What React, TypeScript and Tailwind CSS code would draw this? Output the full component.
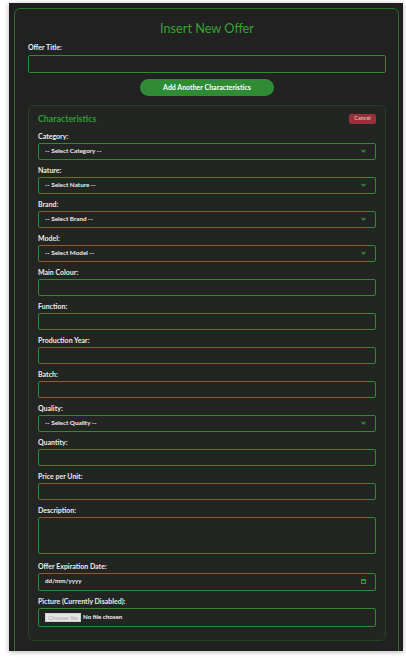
import React from "react";

const font = { fontFamily: "Lato, 'Noto Sans', sans-serif" };

function Label({ children }: { children: React.ReactNode }) {
  return (
    <div className="h-[8px] leading-[8px] text-[7px] font-bold text-[#ececec] mb-[3px] whitespace-nowrap">
      {children}
    </div>
  );
}

function Chevron() {
  return (
    <svg width="5" height="4" viewBox="0 0 5 4" className="mr-[9px]">
      <path d="M0.6 0.8 L2.5 3 L4.4 0.8" fill="none" stroke="#3aa53a" strokeWidth="1.1" />
    </svg>
  );
}

function SelectField({ label, text }: { label: string; text: string }) {
  return (
    <div className="mb-[5.5px]">
      <Label>{label}</Label>
      <div className="h-[17.5px] border border-[#2f8a30] rounded-[2px] bg-[#222522] flex items-center justify-between pl-[6px]">
        <span className="text-[6.3px] font-bold text-[#f0f0f0] leading-none">{text}</span>
        <Chevron />
      </div>
    </div>
  );
}

function TextField({ label }: { label: string }) {
  return (
    <div className="mb-[5.5px]">
      <Label>{label}</Label>
      <div className="h-[17.5px] border border-[#2f8a30] rounded-[2px] bg-[#222522]" />
    </div>
  );
}

export default function App() {
  return (
    <div className="w-[406px] h-[660px] bg-white pt-[3px] pl-[9px]" style={font}>
      <div className="w-[394px] h-[648px] bg-[#1e1e1e] overflow-hidden shadow-[0_1px_5px_rgba(0,0,0,0.3)] pl-[5px] pt-[5px]">
        <div className="w-[385px] h-[700px] border border-[#2c6e2d] rounded-t-[6px] bg-[#212121] pl-[13px] pr-[12px] pt-[11px]">
          <div className="text-center text-[12.7px] leading-[16px] text-[#36a336]">Insert New Offer</div>
          <div className="mt-[7px]">
            <div className="h-[8px] leading-[8px] text-[7px] font-bold text-[#ececec] mb-[4px]">Offer Title:</div>
            <div className="h-[17.5px] border border-[#2f8a30] rounded-[2px] bg-[#212121]" />
          </div>
          <div className="flex justify-center mt-[6.5px]">
            <div className="w-[134px] h-[17px] rounded-full bg-[#2f8c34] flex items-center justify-center text-[7px] font-bold text-white leading-none">
              Add Another Characteristics
            </div>
          </div>
          <div className="mt-[9px] border border-[#263f27] rounded-[5px] bg-[#222522] px-[9px] pt-[7px] pb-[13px]">
            <div className="h-[12px] flex items-center justify-between">
              <span className="text-[8.8px] font-bold text-[#2f9e33] leading-none">Characteristics</span>
              <div className="w-[27px] h-[10px] rounded-[2px] bg-[#9a3039] flex items-center justify-center text-[5.5px] font-bold text-[#d9b4b6] leading-none">
                Cancel
              </div>
            </div>
            <div className="mt-[6.5px]">
              <SelectField label="Category:" text="-- Select Category --" />
              <SelectField label="Nature:" text="-- Select Nature --" />
              <SelectField label="Brand:" text="-- Select Brand --" />
              <SelectField label="Model:" text="-- Select Model --" />
              <TextField label="Main Colour:" />
              <TextField label="Function:" />
              <TextField label="Production Year:" />
              <TextField label="Batch:" />
              <SelectField label="Quality:" text="-- Select Quality --" />
              <TextField label="Quantity:" />
              <TextField label="Price per Unit:" />
              <div className="mb-[8px]">
                <Label>Description:</Label>
                <div className="h-[37px] border border-[#2f8a30] rounded-[2px] bg-[#222522]" />
              </div>
              <div className="mb-[6.5px]">
                <Label>Offer Expiration Date:</Label>
                <div className="h-[18px] border border-[#2f8a30] rounded-[2px] bg-[#222522] flex items-center justify-between pl-[6px]">
                  <span className="text-[6.3px] font-bold text-[#f0f0f0] leading-none">dd/mm/yyyy</span>
                  <svg width="5" height="5" viewBox="0 0 5 5" className="mr-[9px]">
                    <rect x="0.5" y="0.5" width="4" height="4" fill="none" stroke="#2f9e33" strokeWidth="1" />
                    <rect x="0.5" y="0.5" width="4" height="1.3" fill="#2f9e33" />
                  </svg>
                </div>
              </div>
              <div>
                <Label>Picture (Currently Disabled):</Label>
                <div className="h-[19px] border border-[#2f8a30] rounded-[2px] bg-[#222522] flex items-center pl-[6px]">
                  <div className="w-[36px] h-[9px] bg-[#e6e6e6] border border-[#cfcfcf] flex items-center justify-center text-[6px] text-[#a8a8a8] leading-none" style={{ fontFamily: "'Liberation Sans', sans-serif" }}>
                    Choose file
                  </div>
                  <span className="ml-[2px] text-[6.2px] font-bold text-[#f0f0f0] leading-none">No file chosen</span>
                </div>
              </div>
            </div>
          </div>
        </div>
      </div>
    </div>
  );
}
